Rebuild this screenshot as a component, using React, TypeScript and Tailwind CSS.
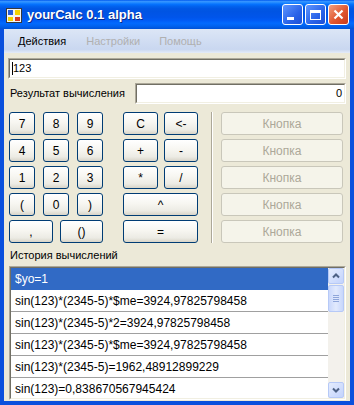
import React from "react";

const Btn = ({ children, className = "" }: { children?: React.ReactNode; className?: string }) => (
  <div
    className={
      "h-[23px] rounded-[3px] border border-[#003c74] bg-[linear-gradient(to_bottom,#ffffff_0%,#f7f6f1_45%,#ecebe4_80%,#d8d4c8_100%)] text-[12px] leading-none text-black flex items-center justify-center " +
      className
    }
  >
    {children}
  </div>
);

const DisBtn = () => (
  <div className="h-[23px] rounded-[3px] border border-[#c9c7ba] bg-[#f5f4ea] text-[12px] leading-none text-[#aca899] flex items-center justify-center">
    Кнопка
  </div>
);

const Sunken = ({ children, className = "" }: { children?: React.ReactNode; className?: string }) => (
  <div className={"border border-t-[#aca899] border-l-[#aca899] border-b-white border-r-white " + className}>
    <div className="h-full border border-t-[#716f64] border-l-[#716f64] border-b-[#f1efe2] border-r-[#f1efe2] bg-white">
      {children}
    </div>
  </div>
);

const items = [
  "$yo=1",
  "sin(123)*(2345-5)*$me=3924,97825798458",
  "sin(123)*(2345-5)*2=3924,97825798458",
  "sin(123)*(2345-5)*$me=3924,97825798458",
  "sin(123)*(2345-5)=1962,48912899229",
  "sin(123)=0,838670567945424",
];

export default function App() {
  return (
    <div className="w-[354px] h-[405px] font-['Liberation_Sans',Arial,sans-serif] bg-[#0a50dd] flex flex-col overflow-hidden">
      {/* Title bar */}
      <div className="h-[29px] shrink-0 flex items-center bg-[linear-gradient(to_bottom,#0058ee_0%,#3593ff_5%,#288eff_8%,#127dff_12%,#036ffc_16%,#0262ee_22%,#0057e5_30%,#0054e3_40%,#0055eb_60%,#005bf5_70%,#026afe_80%,#0062ef_90%,#0052d6_100%)] pl-[6px] pr-[5px]">
        <svg width="16" height="16" viewBox="0 0 16 16" className="shrink-0">
          <rect x="0.5" y="1.5" width="15" height="14" fill="#f4f4f4" stroke="#3a3a3a" />
          <rect x="2" y="3" width="5" height="5" fill="#2a5bd7" />
          <rect x="9" y="3" width="5" height="5" fill="#f5d200" />
          <rect x="2" y="10" width="5" height="4" fill="#f5d200" />
          <rect x="9" y="10" width="5" height="4" fill="#d83a1f" />
        </svg>
        <span className="ml-[5px] text-white font-bold text-[13px] [text-shadow:1px_1px_0_#0b2a8a]">
          yourCalc 0.1 alpha
        </span>
        <div className="ml-auto flex gap-[2px]">
          <div className="w-[21px] h-[21px] rounded-[3px] border border-white bg-[linear-gradient(135deg,#5f96ff,#2a63e8_60%,#1c4fd6)] flex items-end justify-start">
            <div className="ml-[4px] mb-[4px] w-[7px] h-[3px] bg-white" />
          </div>
          <div className="w-[21px] h-[21px] rounded-[3px] border border-white bg-[linear-gradient(135deg,#5f96ff,#2a63e8_60%,#1c4fd6)] flex items-center justify-center">
            <div className="w-[11px] h-[10px] border border-white border-t-[3px]" />
          </div>
          <div className="w-[21px] h-[21px] rounded-[3px] border border-white bg-[linear-gradient(135deg,#f2a080,#e0562f_55%,#c83a1c)] flex items-center justify-center">
            <svg width="11" height="11" viewBox="0 0 11 11">
              <path d="M1.5 1.5 L9.5 9.5 M9.5 1.5 L1.5 9.5" stroke="white" strokeWidth="2.2" />
            </svg>
          </div>
        </div>
      </div>

      <div className="flex-1 flex flex-col px-[4px] pb-[4px] min-h-0">
        {/* Menu bar */}
        <div className="h-[24px] shrink-0 flex items-center bg-[linear-gradient(to_bottom,#dce6f6,#c9d7f0_85%,#e4ebf8)] text-[11px] whitespace-nowrap">
          <span className="ml-[14px] text-black">Действия</span>
          <span className="ml-[20px] text-[#b0b0b0]">Настройки</span>
          <span className="ml-[19px] text-[#b0b0b0]">Помощь</span>
        </div>

        {/* Body */}
        <div className="flex-1 bg-[#ece9d8] flex flex-col pl-[4px] pr-[4px] min-h-0">
          <Sunken className="mt-[5px] h-[21px]">
            <div className="h-full flex items-center pl-[2px] text-[11px] text-black">
              <div className="w-[1px] h-[13px] bg-black" />
              <span>123</span>
            </div>
          </Sunken>

          <div className="mt-[4px] flex items-center h-[21px]">
            <span className="ml-[2px] shrink-0 whitespace-nowrap text-[11px] text-black">Результат вычисления</span>
            <Sunken className="ml-auto shrink-0 w-[211px] h-[21px]">
              <div className="h-full flex items-center justify-end pr-[2px] text-[11px] text-black">0</div>
            </Sunken>
          </div>

          {/* Buttons */}
          <div className="mt-[8px] flex">
            <div className="ml-[1px] w-[94px] flex flex-col gap-[4px]">
              <div className="grid grid-cols-3 gap-x-[8px] gap-y-[4px]">
                {["7", "8", "9", "4", "5", "6", "1", "2", "3", "(", "0", ")"].map((k, i) => (
                  <Btn key={i}>{k}</Btn>
                ))}
              </div>
              <div className="flex gap-[7px]">
                <Btn className="w-[44px]">,</Btn>
                <Btn className="flex-1">()</Btn>
              </div>
            </div>

            <div className="ml-[20px] w-[75px] flex flex-col gap-[4px]">
              <div className="flex gap-[6px]">
                <Btn className="w-[35px]">C</Btn>
                <Btn className="flex-1">&lt;-</Btn>
              </div>
              <div className="flex gap-[6px]">
                <Btn className="w-[35px]">+</Btn>
                <Btn className="flex-1">-</Btn>
              </div>
              <div className="flex gap-[6px]">
                <Btn className="w-[35px]">*</Btn>
                <Btn className="flex-1">/</Btn>
              </div>
              <Btn>^</Btn>
              <Btn>=</Btn>
            </div>

            <div className="ml-[13px] w-[2px] border-l border-l-[#aca899] border-r border-r-white" />

            <div className="ml-[8px] w-[122px] flex flex-col gap-[4px]">
              <DisBtn />
              <DisBtn />
              <DisBtn />
              <DisBtn />
              <DisBtn />
            </div>
          </div>

          <div className="mt-[4px] ml-[2px] text-[11px] text-black leading-[16px]">История вычислений</div>

          <Sunken className="mt-[3px] ml-[1px] h-[134px]">
            <div className="h-full flex overflow-hidden">
              <div className="flex-1 flex flex-col min-w-0">
                {items.map((t, i) => (
                  <div
                    key={i}
                    className={
                      "h-[22px] shrink-0 flex items-center pl-[4px] text-[12px] whitespace-nowrap overflow-hidden " +
                      (i === 0
                        ? "bg-[#316ac5] text-white"
                        : "text-black border-b border-b-[#a0a0a0]")
                    }
                  >
                    {t}
                  </div>
                ))}
              </div>
              {/* Scrollbar */}
              <div className="w-[16px] shrink-0 bg-[#f3f1ec] flex flex-col">
                <div className="h-[16px] rounded-[2px] border border-[#b6c9f7] bg-[linear-gradient(135deg,#e4ecfd,#c3d3fd)] flex items-center justify-center">
                  <svg width="8" height="6" viewBox="0 0 8 6">
                    <path d="M1 4.5 L4 1.5 L7 4.5" fill="none" stroke="#4d6185" strokeWidth="2" />
                  </svg>
                </div>
                <div className="mt-[1px] h-[27px] rounded-[2px] border border-[#b6c9f7] bg-[linear-gradient(90deg,#cad8fc,#e2eafd_50%,#c7d6fc)] flex flex-col items-center justify-center gap-[1px]">
                  <div className="w-[6px] h-[1px] bg-[#8fa6da]" />
                  <div className="w-[6px] h-[1px] bg-[#8fa6da]" />
                  <div className="w-[6px] h-[1px] bg-[#8fa6da]" />
                  <div className="w-[6px] h-[1px] bg-[#8fa6da]" />
                </div>
                <div className="flex-1" />
                <div className="h-[16px] rounded-[2px] border border-[#b6c9f7] bg-[linear-gradient(135deg,#e4ecfd,#c3d3fd)] flex items-center justify-center">
                  <svg width="8" height="6" viewBox="0 0 8 6">
                    <path d="M1 1.5 L4 4.5 L7 1.5" fill="none" stroke="#4d6185" strokeWidth="2" />
                  </svg>
                </div>
              </div>
            </div>
          </Sunken>
        </div>
      </div>
    </div>
  );
}
